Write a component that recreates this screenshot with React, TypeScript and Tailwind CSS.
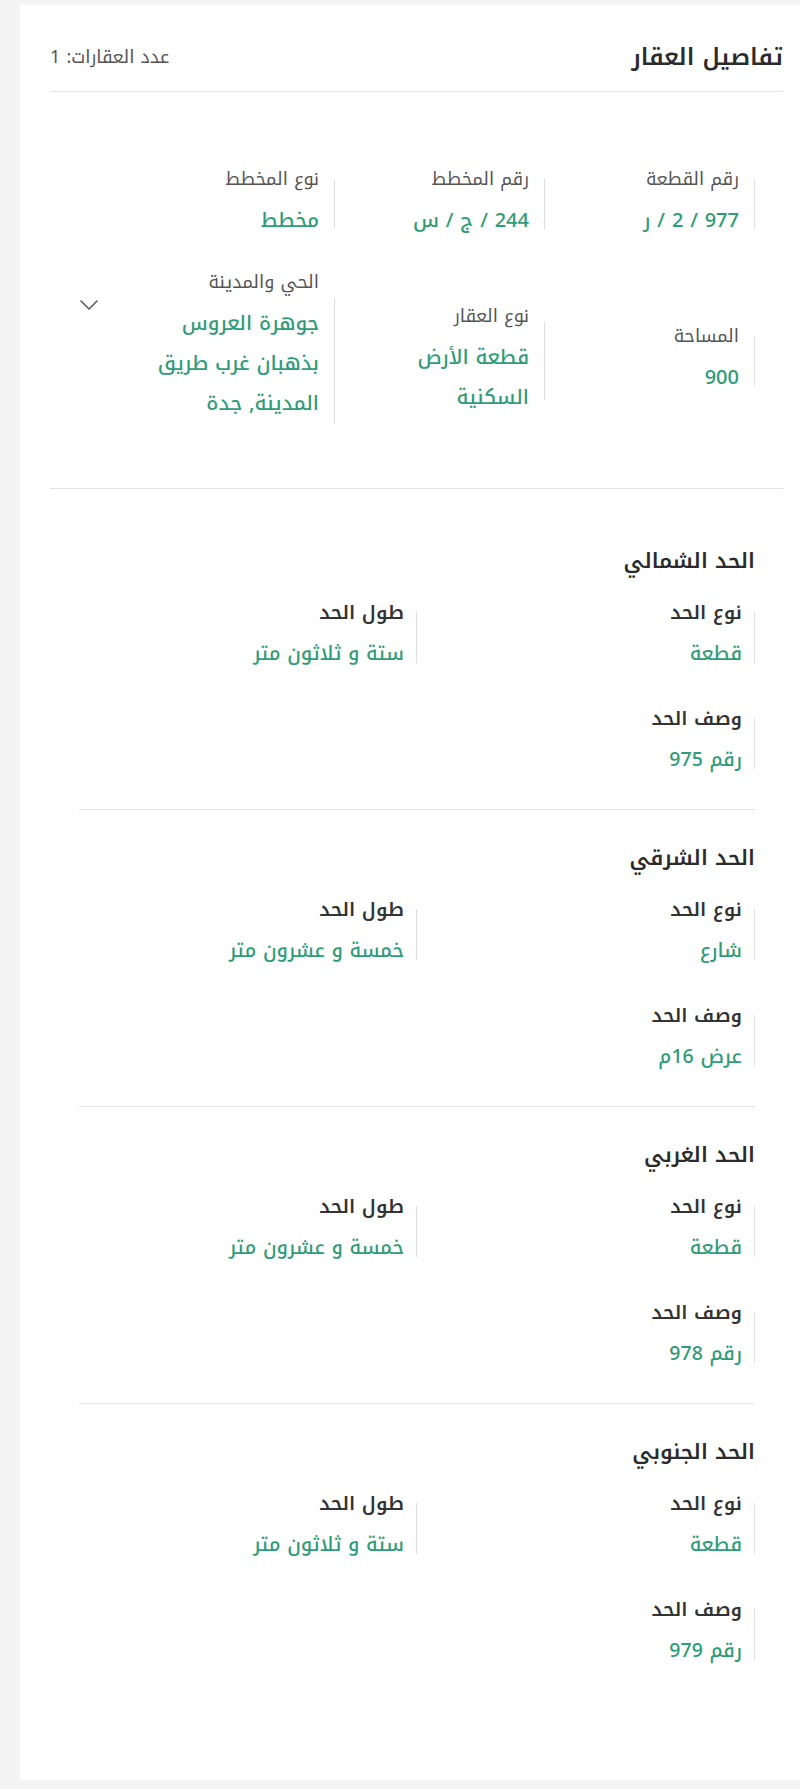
import React from "react";

type Field = { label: string; value: string[] };

const font = "font-['Noto_Kufi_Arabic','Noto_Sans_Arabic','DejaVu_Sans',sans-serif]";

const plotFields: Field[] = [
  { label: "رقم القطعة", value: ["977 / 2 / ر"] },
  { label: "رقم المخطط", value: ["244 / ج / س"] },
  { label: "نوع المخطط", value: ["مخطط"] },
  { label: "المساحة", value: ["900"] },
  { label: "نوع العقار", value: ["قطعة الأرض", "السكنية"] },
  { label: "الحي والمدينة", value: ["جوهرة العروس", "بذهبان غرب طريق", "المدينة, جدة"] },
];

const boundaries = [
  { title: "الحد الشمالي", type: "قطعة", length: "ستة و ثلاثون متر", desc: "رقم 975" },
  { title: "الحد الشرقي", type: "شارع", length: "خمسة و عشرون متر", desc: "عرض 16م" },
  { title: "الحد الغربي", type: "قطعة", length: "خمسة و عشرون متر", desc: "رقم 978" },
  { title: "الحد الجنوبي", type: "قطعة", length: "ستة و ثلاثون متر", desc: "رقم 979" },
];

function Divider() {
  return <span className="absolute right-0 top-[15%] bottom-[15%] w-px bg-[#dedede]" />;
}

function PlotItem({ field, extra }: { field: Field; extra?: string }) {
  return (
    <div className={`relative pr-4 ${extra ?? ""}`}>
      <Divider />
      <div className="text-[18px] leading-[22px] text-[#555]">{field.label}</div>
      <div className="mt-[10px] text-[20px] leading-[40px] font-medium text-[#2f9c78]">
        {field.value.map((v) => (
          <div key={v}>{v}</div>
        ))}
      </div>
    </div>
  );
}

function BoundaryItem({ label, value }: { label: string; value: string }) {
  return (
    <div className="relative pr-[13px]">
      <Divider />
      <div className="text-[19px] leading-[24px] font-semibold text-[#333]">{label}</div>
      <div className="mt-[9px] text-[19.5px] leading-[40px] font-medium text-[#2f9c78]">{value}</div>
    </div>
  );
}

export default function App() {
  return (
    <div dir="rtl" className={`min-h-screen bg-[#f4f4f5] pt-[5px] pl-[20px] pb-[9px] ${font}`}>
      <div className="min-h-[1775px] bg-white pr-[17px] pl-[30px]">
        <div className="flex items-center justify-between border-b border-[#e3e3e3] pt-[36px] pb-[18px]">
          <h1 className="text-[23.5px] leading-[32px] font-semibold text-[#2b2b2b]">تفاصيل العقار</h1>
          <span className="text-[18px] leading-[22px] text-[#555]">عدد العقارات: 1</span>
        </div>

        <div className="flex border-b border-[#e3e3e3] pr-[28px] pl-[29px] pt-[76px] pb-[37px]">
          <div className="grid flex-1 grid-cols-3 items-center gap-y-[31px]">
            {plotFields.map((f, i) => (
              <PlotItem key={f.label} field={f} extra={i === 5 ? "pb-[28px]" : ""} />
            ))}
          </div>
          <div className="flex w-[46px] justify-end pt-[132px]">
            <svg width="18" height="10" viewBox="0 0 18 10" fill="none" className="ml-[1px] h-[10px]">
              <path d="M1 1l8 8 8-8" stroke="#555" strokeWidth="1.5" strokeLinecap="round" strokeLinejoin="round" />
            </svg>
          </div>
        </div>

        <div className="mt-[24px] pr-[28px] pl-[29px]">
          {boundaries.map((b, i) => (
            <div
              key={b.title}
              className={`pt-[34px] pb-[29px] ${i < boundaries.length - 1 ? "border-b border-[#e3e3e3]" : ""}`}
            >
              <h2 className="text-[21px] leading-[28px] font-semibold text-[#2b2b2b]">{b.title}</h2>
              <div className="mt-[26px] grid grid-cols-2 gap-y-[33px]">
                <BoundaryItem label="نوع الحد" value={b.type} />
                <BoundaryItem label="طول الحد" value={b.length} />
                <BoundaryItem label="وصف الحد" value={b.desc} />
              </div>
            </div>
          ))}
        </div>
      </div>
    </div>
  );
}
